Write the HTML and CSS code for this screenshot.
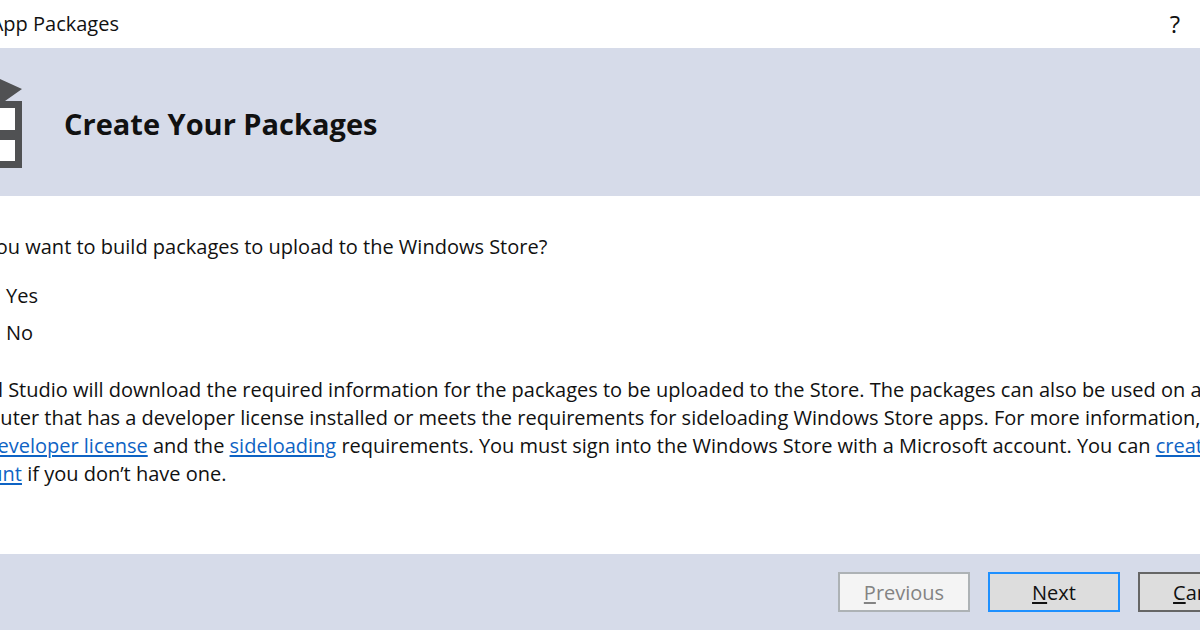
FILE: index.html
```
<!DOCTYPE html>
<html lang="en">

<head>
  <meta charset="UTF-8">
  <meta name="viewport" content="width=device-width, initial-scale=1.0">
  <title>Create App Packages</title>
  <link rel="stylesheet" href="styles.css">
</head>

<body>
  <div class="dialog">
    <div class="titlebar">
      <span>Create App Packages</span>
      <button class="help" type="button" aria-label="Help">?</button>
    </div>

    <header class="banner">
      <svg class="banner-icon" width="70" height="92" viewBox="0 0 70 92" aria-hidden="true">
        <path d="M35 10 L48 3 L70 13 L53 25 H17 L0 13 L22 3 Z" fill="#505153" />
        <path d="M4 25 H70 V92 H4 Z" fill="#505153" />
        <path d="M10 32 H33 V54 H10 Z M40 32 H63 V54 H40 Z M10 64 H33 V85 H10 Z M40 64 H63 V85 H40 Z" fill="#fff" />
      </svg>
      <h1>Create Your Packages</h1>
    </header>

    <main class="content">
      <fieldset class="question">
        <legend>Do you want to build packages to upload to the Windows Store?</legend>
        <label class="option"><input type="radio" name="store" value="yes" checked> Yes</label>
        <label class="option"><input type="radio" name="store" value="no"> No</label>
      </fieldset>
      <p class="details">
        Visual Studio will download the required information for the packages to be uploaded to the Store. The packages can also be used on a<br>
        computer that has a developer license installed or meets the requirements for sideloading Windows Store apps. For more information,<br>
        see <a href="#">developer license</a> and the <a href="#">sideloading</a> requirements. You must sign into the Windows Store with a Microsoft account. You can <a href="#">create<br>
        account</a> if you don’t have one.
      </p>
    </main>

    <footer class="actions">
      <button class="btn" type="button" disabled><u>P</u>revious</button>
      <button class="btn btn-default" type="button"><u>N</u>ext</button>
      <button class="btn" type="button"><u>C</u>ancel</button>
    </footer>
  </div>
</body>

</html>
```

FILE: styles.css
```
body {
  margin: 0;
  overflow: hidden;
  background: #fff;
  color: #111;
  font-family: "Open Sans", "Noto Sans", sans-serif;
  font-size: 20px;
  line-height: 28px;
}

/* The dialog is wider than the window on both sides */
.dialog {
  display: flex;
  flex-direction: column;
  min-height: 100vh;
  margin: 0 -88px 0 -76px;
}

.titlebar {
  display: flex;
  justify-content: space-between;
  align-items: center;
  height: 48px;
  padding-right: 100px;
}

.help {
  padding: 0 8px;
  border: 0;
  background: none;
  color: #111;
  font: inherit;
  font-size: 24px;
}

.banner {
  display: flex;
  align-items: center;
  gap: 42px;
  height: 148px;
  padding-left: 28px;
  background: #d6dbe9;
}

.banner h1 {
  margin: 0;
  padding-top: 4px;
  font-size: 29px;
  line-height: 40px;
}

.content {
  flex: 1;
  padding: 37px 24px 0;
}

.question {
  margin: 0;
  padding: 0 0 0 6px;
  border: 0;
}

.question legend {
  margin-bottom: 21px;
  padding: 0;
}

.option {
  display: flex;
  align-items: center;
  gap: 8px;
  margin-bottom: 9px;
  padding-left: 26px;
}

.option input {
  width: 18px;
  height: 18px;
  margin: 0;
}

.details {
  margin: 20px 0 0;
  white-space: nowrap;
}

.details a {
  color: #0e63c4;
  text-underline-offset: 2px;
}

.actions {
  display: flex;
  justify-content: flex-end;
  gap: 18px;
  padding: 18px;
  background: #d6dbe9;
}

.btn {
  width: 132px;
  height: 40px;
  padding: 2px 0 0;
  border: 2px solid #666;
  background: #ddd;
  color: #111;
  font: inherit;
}

.btn-default {
  border-color: #1e90ff;
}

.btn:disabled {
  border-color: #adb2b5;
  background: #f4f4f4;
  color: #838383;
}

.btn u {
  text-underline-offset: 2px;
}
```
